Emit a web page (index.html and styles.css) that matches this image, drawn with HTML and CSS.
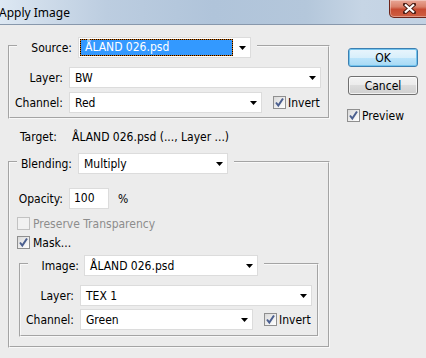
FILE: index.html
```html
<!DOCTYPE html>
<html lang="en">
<head>
    <meta charset="UTF-8">
    <title>Apply Image</title>
    <link rel="stylesheet" href="styles.css">
</head>
<body>
    <div class="titlebar">
        <span class="title">Apply Image</span>
        <span class="close-btn">
            <svg width="13" height="11" viewBox="0 0 13 11">
                <path d="M2 1.5l9 8M11 1.5l-9 8" stroke="#4a1c14" stroke-width="4" stroke-linecap="square"/>
                <path d="M2 1.5l9 8M11 1.5l-9 8" stroke="#fff" stroke-width="2.2"/>
            </svg>
        </span>
    </div>

    <div class="dialog">
        <div class="main">
            <!-- source -->
            <fieldset class="group">
                <legend class="group-head">
                    <span class="label head-label">Source:</span>
                    <span class="select w-source">
                        <span class="sel-focus">ÅLAND 026.psd</span>
                        <svg class="arrow" width="7" height="4" viewBox="0 0 7 4"><path d="M0 0h7L3.5 4z"/></svg>
                    </span>
                </legend>
                <div class="row">
                    <span class="label">Layer:</span>
                    <span class="select w-layer">
                        <span class="sel-text">BW</span>
                        <svg class="arrow" width="7" height="4" viewBox="0 0 7 4"><path d="M0 0h7L3.5 4z"/></svg>
                    </span>
                </div>
                <div class="row">
                    <span class="label">Channel:</span>
                    <span class="select w-channel">
                        <span class="sel-text">Red</span>
                        <svg class="arrow" width="7" height="4" viewBox="0 0 7 4"><path d="M0 0h7L3.5 4z"/></svg>
                    </span>
                    <span class="check invert">
                        <span class="box"><svg width="11" height="11" viewBox="0 0 11 11"><path d="M2 5.5l2.3 3L9 1.5" fill="none" stroke="#4b5f8f" stroke-width="2"/></svg></span>
                        Invert
                    </span>
                </div>
            </fieldset>

            <div class="target">
                <span class="target-label">Target:</span>
                <span>ÅLAND 026.psd (..., Layer ...)</span>
            </div>

            <!-- blending -->
            <fieldset class="group blend-group">
                <legend class="group-head">
                    <span class="label head-label">Blending:</span>
                    <span class="select w-blend">
                        <span class="sel-text">Multiply</span>
                        <svg class="arrow" width="7" height="4" viewBox="0 0 7 4"><path d="M0 0h7L3.5 4z"/></svg>
                    </span>
                </legend>
                <div class="row">
                    <span class="label">Opacity:</span>
                    <span class="input">100</span>
                    <span class="unit">%</span>
                </div>
                <div class="check disabled preserve">
                    <span class="box"></span>
                    Preserve Transparency
                </div>
                <div class="check mask">
                    <span class="box"><svg width="11" height="11" viewBox="0 0 11 11"><path d="M2 5.5l2.3 3L9 1.5" fill="none" stroke="#4b5f8f" stroke-width="2"/></svg></span>
                    Mask...
                </div>

                <fieldset class="group mask-group">
                    <legend class="group-head">
                        <span class="label image-label">Image:</span>
                        <span class="select w-image">
                            <span class="sel-text">ÅLAND 026.psd</span>
                            <svg class="arrow" width="7" height="4" viewBox="0 0 7 4"><path d="M0 0h7L3.5 4z"/></svg>
                        </span>
                    </legend>
                    <div class="row">
                        <span class="label">Layer:</span>
                        <span class="select w-mlayer">
                            <span class="sel-text">TEX 1</span>
                            <svg class="arrow" width="7" height="4" viewBox="0 0 7 4"><path d="M0 0h7L3.5 4z"/></svg>
                        </span>
                    </div>
                    <div class="row">
                        <span class="label">Channel:</span>
                        <span class="select w-mchannel">
                            <span class="sel-text">Green</span>
                            <svg class="arrow" width="7" height="4" viewBox="0 0 7 4"><path d="M0 0h7L3.5 4z"/></svg>
                        </span>
                        <span class="check invert">
                            <span class="box"><svg width="11" height="11" viewBox="0 0 11 11"><path d="M2 5.5l2.3 3L9 1.5" fill="none" stroke="#4b5f8f" stroke-width="2"/></svg></span>
                            Invert
                        </span>
                    </div>
                </fieldset>
            </fieldset>
        </div>

        <div class="side">
            <button class="btn btn-default">OK</button>
            <button class="btn">Cancel</button>
            <div class="check preview">
                <span class="box"><svg width="11" height="11" viewBox="0 0 11 11"><path d="M2 5.5l2.3 3L9 1.5" fill="none" stroke="#4b5f8f" stroke-width="2"/></svg></span>
                Preview
            </div>
        </div>
    </div>
</body>
</html>
```

FILE: styles.css
```css
* {
    margin: 0;
    padding: 0;
    box-sizing: border-box;
}

body {
    width: 426px;
    height: 358px;
    overflow: hidden;
    background: #ececec;
    font-family: "DejaVu Sans Condensed", "Liberation Sans", Arial, sans-serif;
    font-size: 12px;
    color: #000;
}

/* window chrome */
.titlebar {
    height: 25px;
    display: flex;
    justify-content: space-between;
    align-items: flex-start;
    background: linear-gradient(to right, #dde8f3 0%, #cfdcea 10%, #bccde0 25%, #b0c4da 50%, #b4c7db 72%, #c6d5e5 85%, #c2d2e3 100%);
    border-bottom: 1px solid #8898ac;
}

.title {
    font-family: "Noto Sans", "Open Sans", sans-serif;
    font-size: 12px;
    line-height: 25px;
    margin-left: -1px;
}

.close-btn {
    width: 40px;
    height: 18px;
    margin-right: -3px;
    display: flex;
    align-items: center;
    justify-content: center;
    border: 1px solid #6d2419;
    border-top: none;
    border-radius: 0 0 0 5px;
    background: linear-gradient(#e9a797, #d98069 40%, #c74b32 55%, #cf5f42);
    box-shadow: inset 0 0 0 1px rgba(255, 255, 255, 0.35);
}

/* layout */
.dialog {
    display: flex;
}

.main {
    width: 322px;
    margin-left: 8px;
}

.side {
    width: 70px;
    margin-left: 18px;
    display: flex;
    flex-direction: column;
}

/* etched group boxes */
.group {
    border: 2px groove #f8f8f8;
    padding: 9px 0 4px 7px;
    min-width: 0;
    margin-top: 9px;
}

.group-head {
    display: flex;
    align-items: center;
    padding: 3px 6px 0 0;
}

.blend-group {
    margin-top: 5px;
    padding-top: 14px;
    padding-bottom: 9px;
}

.mask-group {
    margin: 3px 9px 0 2px;
    padding-top: 9px;
    padding-bottom: 5px;
}

.row {
    display: flex;
    align-items: center;
    height: 21px;
    margin-bottom: 4px;
}

.row:last-child {
    margin-bottom: 0;
}

.mask-group .row {
    margin-bottom: 3px;
}

.mask-group .row:last-child {
    margin-bottom: 0;
}

.label {
    width: 46px;
    margin-right: 6px;
    display: flex;
    justify-content: flex-end;
    white-space: nowrap;
}

.head-label {
    width: 55px;
}

.image-label {
    width: 51px;
    margin-right: 5px;
}

/* dropdowns */
.select {
    height: 21px;
    display: flex;
    align-items: center;
    background: #fff;
    border: 1px solid #dcdcdc;
    white-space: nowrap;
}

.sel-text {
    padding-left: 5px;
}

.sel-focus {
    margin-left: 1px;
    width: 153px;
    height: 17px;
    line-height: 15px;
    padding-left: 4px;
    color: #fff;
    border: 1px dotted #000;
    background: linear-gradient(#3399ff, #3399ff) padding-box, linear-gradient(#d07010, #d07010) border-box;
}

.arrow {
    margin-left: auto;
    margin-right: 4px;
    fill: #000;
}

.w-source { width: 173px; }
.w-layer { width: 252px; }
.w-channel { width: 193px; }
.w-blend { width: 150px; }
.w-image { width: 174px; }
.w-mlayer { width: 232px; }
.w-mchannel { width: 173px; }

.input {
    width: 40px;
    height: 21px;
    line-height: 19px;
    padding-left: 4px;
    background: #fff;
    border: 1px solid #dcdcdc;
}

.unit {
    margin-left: 9px;
}

/* target line */
.target {
    display: flex;
    margin-top: 11px;
    padding-left: 12px;
    line-height: 15px;
}

.target-label {
    width: 52px;
}

/* checkboxes */
.check {
    display: flex;
    align-items: center;
    gap: 3px;
    height: 13px;
    white-space: nowrap;
}

.box {
    width: 13px;
    height: 13px;
    display: flex;
    align-items: center;
    justify-content: center;
    border: 1px solid #8f8f8f;
    background: linear-gradient(135deg, #d9d9d9, #f4f4f4 70%, #fff);
}

.check.disabled {
    color: #8d8d8d;
}

.check.disabled .box {
    border-color: #c2c2c2;
    background: #f1f1f1;
}

.invert {
    margin-left: 11px;
    gap: 2px;
}

.preserve {
    margin-top: 8px;
}

.mask {
    margin-top: 6px;
}

.preview {
    margin-top: 14px;
    margin-left: -1px;
    gap: 2px;
}

/* buttons */
.btn {
    width: 70px;
    height: 19px;
    font-family: inherit;
    font-size: 12px;
    color: #000;
    border: 1px solid #707070;
    border-radius: 3px;
    background: linear-gradient(#f3f3f3, #ebebeb 50%, #dcdcdc 50%, #cfcfcf);
    box-shadow: inset 0 0 0 1px rgba(255, 255, 255, 0.7);
}

.btn-default {
    margin-top: 23px;
    margin-bottom: 9px;
    border-color: #3c7fb1;
    background: linear-gradient(#e9f5fc, #d8effb 50%, #bde5fb 50%, #a8d9f4);
    box-shadow: inset 0 0 0 1px #73c4ee;
}
```
